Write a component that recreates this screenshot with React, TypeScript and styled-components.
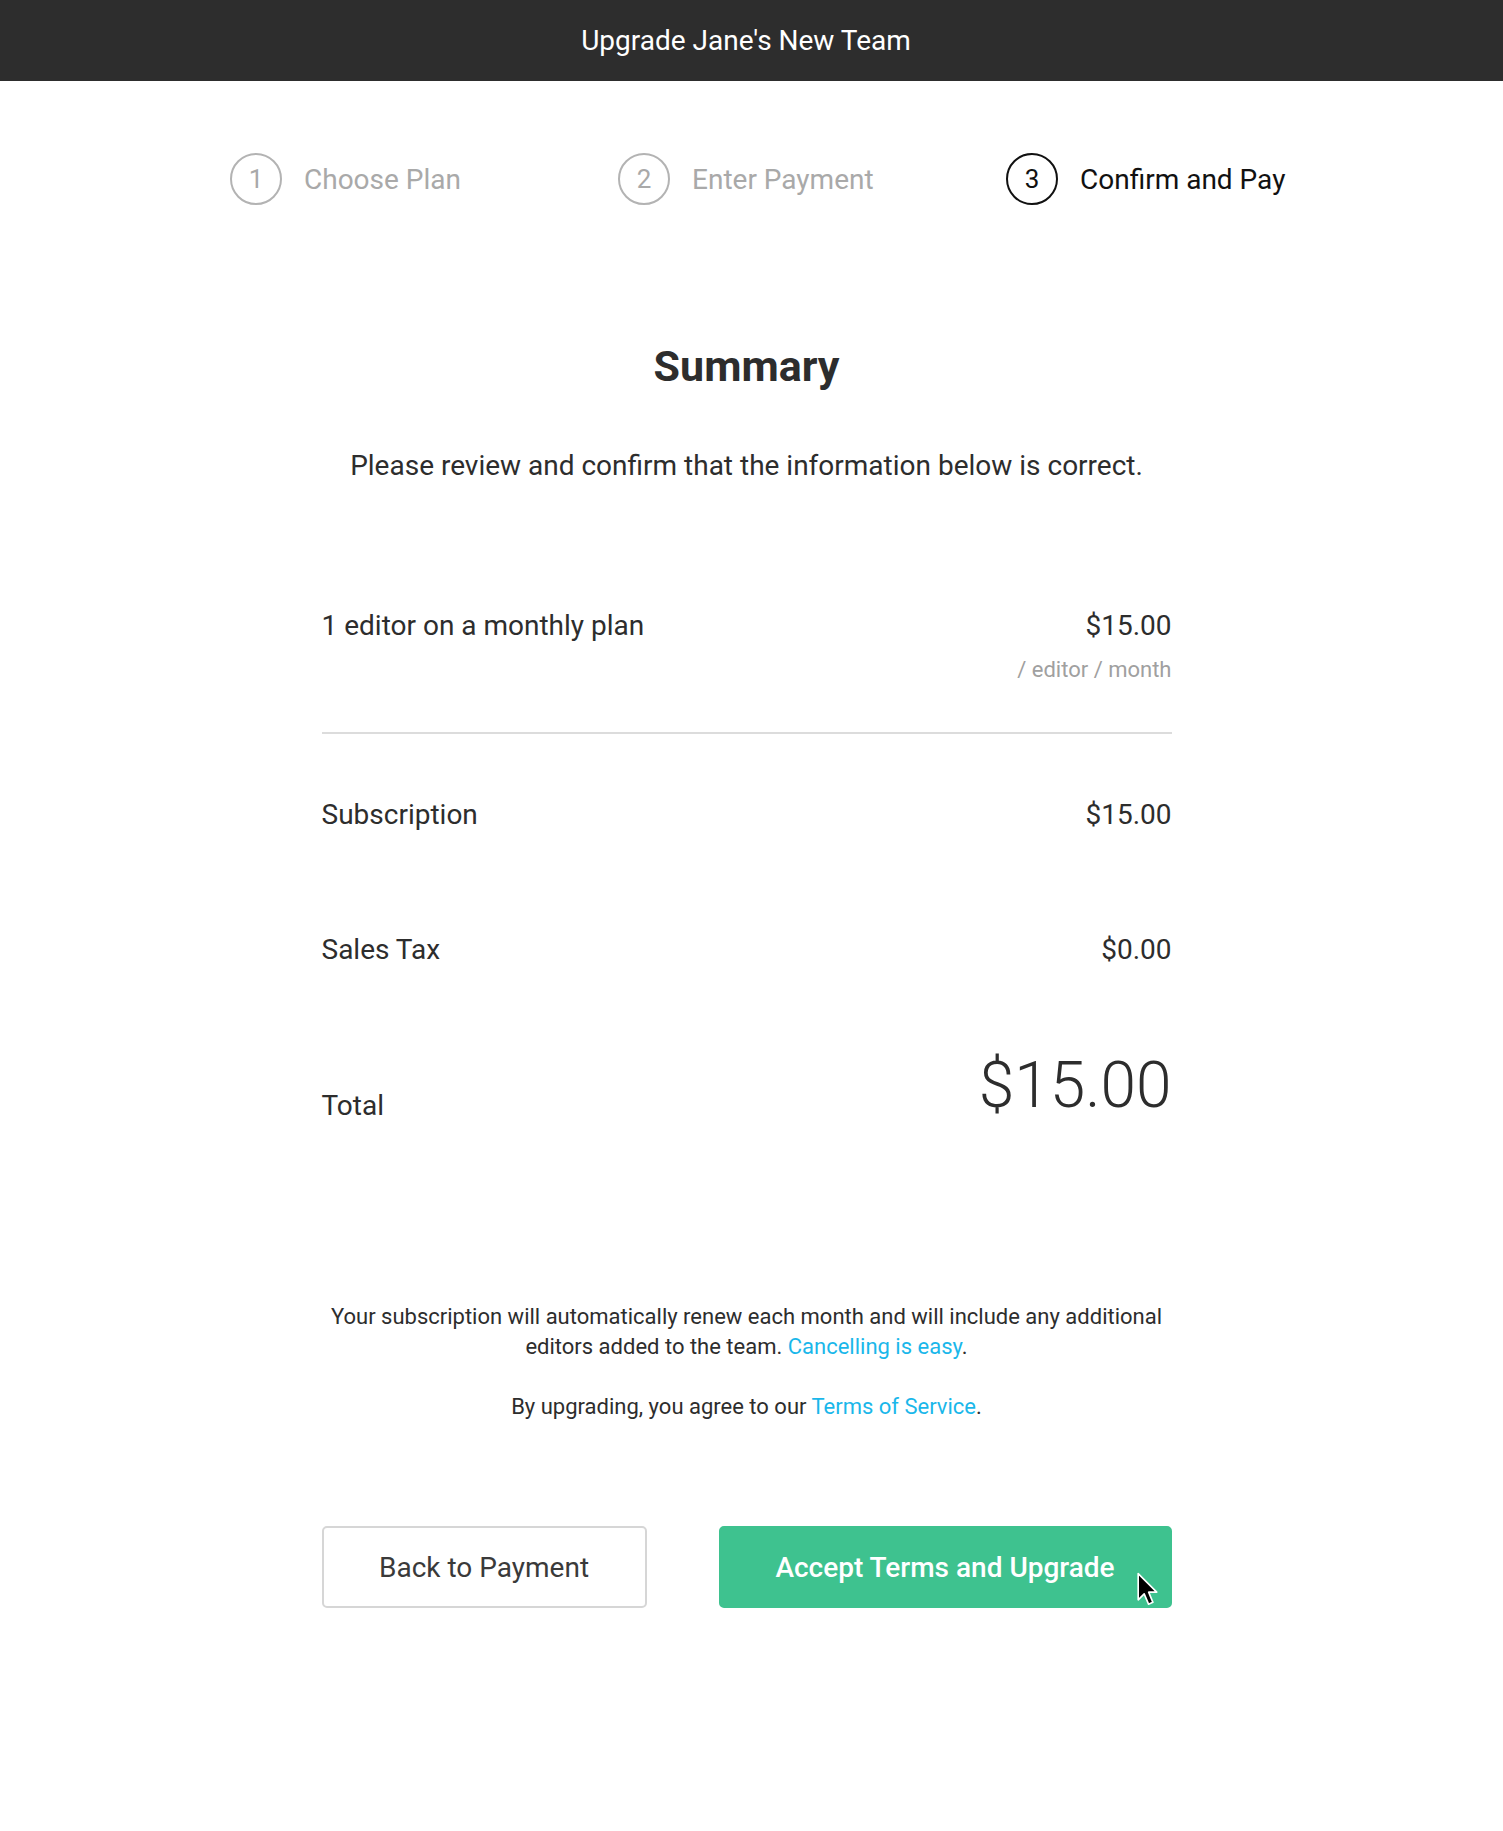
import React from "react";
import styled, { createGlobalStyle } from "styled-components";

const GlobalStyle = createGlobalStyle`
  * { box-sizing: border-box; }
  body {
    margin: 0;
    background: #ffffff;
    font-family: Roboto, "Liberation Sans", Arial, sans-serif;
    color: #2d2d2d;
  }
`;

const Page = styled.div`
  min-height: 1831px;
  background: #ffffff;
`;

const TopBar = styled.header`
  height: 81px;
  background: #2d2d2d;
  display: flex;
  align-items: center;
  justify-content: center;
  padding-right: 11px;
`;

const TopTitle = styled.h1`
  margin: 0;
  color: #ffffff;
  font-size: 28px;
  font-weight: 400;
`;

const Stepper = styled.ol`
  list-style: none;
  margin: 72px 0 0 230px;
  padding: 0;
  display: grid;
  grid-template-columns: 388px 388px auto;
`;

const Step = styled.li<{ $active?: boolean }>`
  display: flex;
  align-items: center;
  gap: 22px;
  color: ${(p) => (p.$active ? "#111111" : "#a9a9a9")};
  font-size: 28px;
`;

const StepNumber = styled.span<{ $active?: boolean }>`
  width: 52px;
  height: 52px;
  border-radius: 50%;
  border: 2px solid ${(p) => (p.$active ? "#111111" : "#b3b3b3")};
  display: flex;
  align-items: center;
  justify-content: center;
  font-size: 26px;
`;

const Main = styled.main`
  width: 850px;
  margin: 0 auto;
  position: relative;
  left: -5px;
`;

const Heading = styled.h2`
  margin: 136px 0 0;
  text-align: center;
  font-size: 43px;
  font-weight: 700;
  color: #2d2d2d;
`;

const Intro = styled.p`
  margin: 58px 0 0;
  text-align: center;
  font-size: 28px;
  color: #2d2d2d;
`;

const LineItem = styled.div`
  margin-top: 127px;
  padding-bottom: 50px;
  border-bottom: 2px solid #dcdcdc;
  display: flex;
  justify-content: space-between;
  align-items: flex-start;
`;

const Label = styled.span`
  font-size: 28px;
  color: #2d2d2d;
`;

const PriceBlock = styled.div`
  display: flex;
  flex-direction: column;
  align-items: flex-end;
  gap: 15px;
`;

const Amount = styled.span`
  font-size: 28px;
  color: #2d2d2d;
`;

const Unit = styled.span`
  font-size: 22px;
  color: #a0a0a0;
`;

const Row = styled.div<{ $top: number }>`
  margin-top: ${(p) => p.$top}px;
  display: flex;
  justify-content: space-between;
  align-items: flex-end;
`;

const TotalAmount = styled.span`
  font-size: 64px;
  font-weight: 300;
  color: #2d2d2d;
  line-height: 1;
  margin-bottom: 4px;
`;

const Notes = styled.div`
  margin-top: 180px;
  text-align: center;
  font-size: 22px;
  line-height: 30px;
  color: #2d2d2d;

  p {
    margin: 0 0 30px;
  }
`;

const Link = styled.a`
  color: #1ab7ea;
  text-decoration: none;
`;

const Actions = styled.div`
  margin-top: 104px;
  display: flex;
  justify-content: space-between;
`;

const Button = styled.button<{ $primary?: boolean }>`
  position: relative;
  height: 82px;
  width: ${(p) => (p.$primary ? "453px" : "325px")};
  border-radius: 5px;
  border: 2px solid ${(p) => (p.$primary ? "#3ec28f" : "#d6d6d6")};
  background: ${(p) => (p.$primary ? "#3ec28f" : "#ffffff")};
  color: ${(p) => (p.$primary ? "#ffffff" : "#3a3a3a")};
  font-family: Roboto, "Liberation Sans", Arial, sans-serif;
  font-size: 28px;
  font-weight: ${(p) => (p.$primary ? 500 : 400)};
  cursor: pointer;
`;

const Pointer = styled.svg`
  position: absolute;
  left: 415px;
  top: 44px;
  width: 24px;
  height: 36px;
`;

const steps = ["Choose Plan", "Enter Payment", "Confirm and Pay"];

export default function App() {
  return (
    <Page>
      <GlobalStyle />
      <TopBar>
        <TopTitle>Upgrade Jane's New Team</TopTitle>
      </TopBar>

      <Stepper>
        {steps.map((s, i) => (
          <Step key={s} $active={i === 2}>
            <StepNumber $active={i === 2}>{i + 1}</StepNumber>
            {s}
          </Step>
        ))}
      </Stepper>

      <Main>
        <Heading>Summary</Heading>
        <Intro>Please review and confirm that the information below is correct.</Intro>

        <LineItem>
          <Label>1 editor on a monthly plan</Label>
          <PriceBlock>
            <Amount>$15.00</Amount>
            <Unit>/ editor / month</Unit>
          </PriceBlock>
        </LineItem>

        <Row $top={64}>
          <Label>Subscription</Label>
          <Amount>$15.00</Amount>
        </Row>
        <Row $top={102}>
          <Label>Sales Tax</Label>
          <Amount>$0.00</Amount>
        </Row>
        <Row $top={88}>
          <Label>Total</Label>
          <TotalAmount>$15.00</TotalAmount>
        </Row>

        <Notes>
          <p>
            Your subscription will automatically renew each month and will include any additional
            editors added to the team. <Link href="#">Cancelling is easy</Link>.
          </p>
          <p>
            By upgrading, you agree to our <Link href="#">Terms of Service</Link>.
          </p>
        </Notes>

        <Actions>
          <Button>Back to Payment</Button>
          <Button $primary>
            Accept Terms and Upgrade
            <Pointer viewBox="0 0 22 32">
              <path
                d="M2 1 L2 25 L7.5 19.5 L11.5 29 L15.5 27.3 L11.6 18 L19 18 Z"
                fill="#000"
                stroke="#fff"
                strokeWidth="1.5"
                strokeLinejoin="round"
              />
            </Pointer>
          </Button>
        </Actions>
      </Main>
    </Page>
  );
}
